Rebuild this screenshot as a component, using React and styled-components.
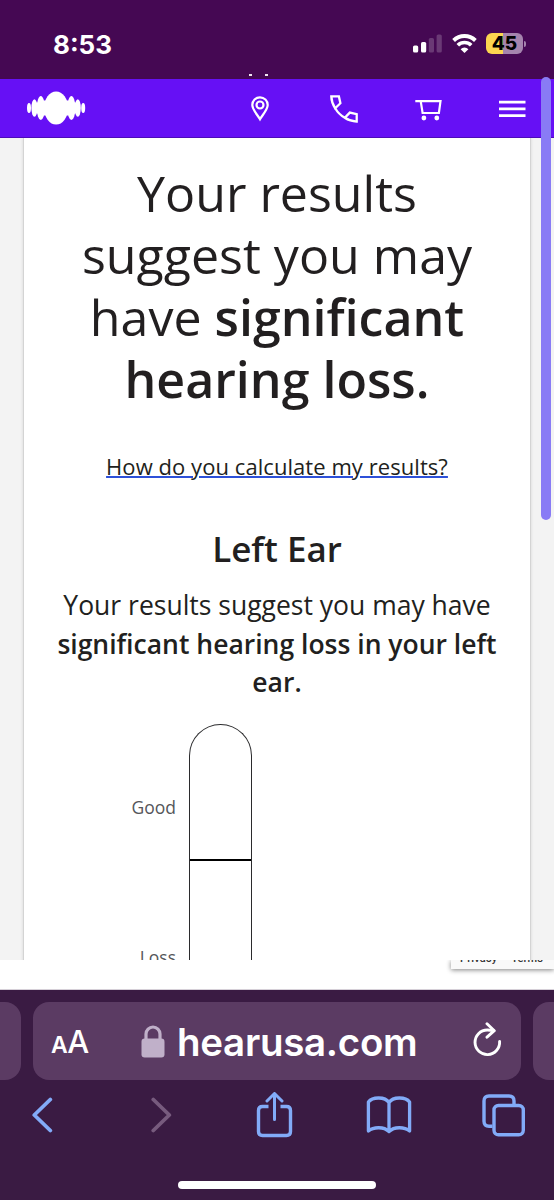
import React from 'react';
import styled, { createGlobalStyle } from 'styled-components';

const palette = {
  statusBar: '#450853',
  nav: '#6610f5',
  text: '#221f20',
  label: '#55565a',
  toolbar: '#3a1b43',
  field: '#5b3b63',
  action: '#82abf8',
};

const App = () => {
  return (
    <>
      <GlobalStyle />
      <Screen>
        <StatusBar>
          <Time>8:53</Time>
          <StatusIcons>
            <SignalIcon />
            <WifiIcon />
            <Battery>
              <BatteryBody>45</BatteryBody>
              <BatteryTip />
            </Battery>
          </StatusIcons>
          <Dots>
            <i />
            <i />
          </Dots>
        </StatusBar>

        <NavBar>
          <Logo />
          <NavIcons>
            <PinIcon />
            <PhoneIcon />
            <CartIcon />
            <MenuIcon />
          </NavIcons>
        </NavBar>

        <Page>
          <Card>
            <Title>
              Your results
              <br />
              suggest you may
              <br />
              have <b>significant</b>
              <br />
              <b>hearing loss.</b>
            </Title>
            <ResultLink href='#'>How do you calculate my results?</ResultLink>
            <EarTitle>Left Ear</EarTitle>
            <EarText>
              Your results suggest you may have
              <br />
              <b>significant hearing loss in your left</b>
              <br />
              <b>ear.</b>
            </EarText>
            <Meter>
              <Labels>
                <Label>Good</Label>
                <Label>Loss</Label>
              </Labels>
              <Tube>
                <TubeTop />
              </Tube>
            </Meter>
          </Card>
        </Page>

        <Strip>
          <Recaptcha>
            <RecaptchaText>
              <span>Privacy</span>
              <span>Terms</span>
            </RecaptchaText>
          </Recaptcha>
        </Strip>

        <Toolbar>
          <AddressRow>
            <NextTab $side='left' />
            <AddressField>
              <TextSize>
                <small>A</small>A
              </TextSize>
              <Domain>
                <LockIcon />
                <span>hearusa.com</span>
              </Domain>
              <ReloadIcon />
            </AddressField>
            <NextTab $side='right' />
          </AddressRow>
          <Actions>
            <BackIcon />
            <ForwardIcon />
            <ShareIcon />
            <BookIcon />
            <TabsIcon />
          </Actions>
          <HomeIndicator />
        </Toolbar>
        <ScrollThumb />
      </Screen>
    </>
  );
};

const SignalIcon = () => (
  <svg width='29' height='19' viewBox='0 0 29 19' fill='#fff'>
    <rect x='0' y='11.5' width='5.2' height='7' rx='1.6' />
    <rect x='8' y='8' width='5.2' height='10.5' rx='1.6' />
    <rect x='15.8' y='4' width='5.2' height='14.5' rx='1.6' opacity='0.2' />
    <rect x='23.6' y='0.5' width='5.2' height='18' rx='1.6' opacity='0.2' />
  </svg>
);

const WifiIcon = () => (
  <svg width='25' height='19' viewBox='0 0 25 19' fill='none'>
    <path d='M1.6 6.5a15.6 15.6 0 0 1 21.8 0' stroke='#fff' strokeWidth='3.9' />
    <path d='M5.8 11.2a9.6 9.6 0 0 1 13.4 0' stroke='#fff' strokeWidth='3.7' />
    <path d='M8.6 15.2a5.6 5.6 0 0 1 7.8 0L12.5 19z' fill='#fff' />
  </svg>
);

const Logo = () => (
  <svg width='59' height='34' viewBox='0 0 59 34' fill='#fff'>
    <ellipse cx='2' cy='17' rx='2' ry='5' />
    <ellipse cx='7.4' cy='17' rx='3' ry='8.7' />
    <ellipse cx='13.8' cy='17' rx='4' ry='12' />
    <ellipse cx='29.1' cy='17' rx='12' ry='16.5' />
    <ellipse cx='44.4' cy='17' rx='4' ry='12' />
    <ellipse cx='50.8' cy='17' rx='3' ry='8.7' />
    <ellipse cx='56.2' cy='17' rx='2' ry='5' />
    <rect x='7.4' y='11.5' width='43.4' height='11' />
    <rect x='13.8' y='9.5' width='30.6' height='15' />
  </svg>
);

const PinIcon = () => (
  <svg width='18' height='26' viewBox='0 0 18 26' fill='none' stroke='#fff' strokeWidth='2.2'>
    <path d='M9 23.2C6.8 19.4 1.3 13.5 1.3 9a7.7 7.7 0 0 1 15.4 0C16.7 13.5 11.2 19.4 9 23.2z' />
    <circle cx='9' cy='9' r='3.5' />
  </svg>
);

const PhoneIcon = () => (
  <svg width='28' height='28' viewBox='0 0 28 28' fill='none' stroke='#fff' strokeWidth='2.3'>
    <path d='M1.3 1.4h7.6l1.5 6.8-5.2 5.1C2.6 9.3 1.4 5.4 1.3 1.4z' />
    <path d='M5.2 13.3c2.3 4 5.6 7.3 9.6 9.5l5-5.2 6.900 1.500v7.500c-4.300-.2-8.300-1.400-11.900-3.800' />
  </svg>
);

const CartIcon = () => (
  <svg width='27' height='23' viewBox='0 -2 27 23' fill='none' stroke='#fff' strokeWidth='2.2'>
    <path d='M0.3 1.2h25.2l-1.6 11.8H7.6L5.7 1.2' />
    <circle cx='8.9' cy='18' r='2.4' fill='#fff' stroke='none' />
    <circle cx='21.8' cy='18' r='2.4' fill='#fff' stroke='none' />
  </svg>
);

const MenuIcon = () => (
  <svg width='27' height='18' viewBox='0 0 27 18' stroke='#fff' strokeWidth='2.8'>
    <path d='M0 2.2h26.5M0 8.9h26.5M0 15.6h26.5' />
  </svg>
);

const LockIcon = () => (
  <svg width='24' height='33' viewBox='0 0 24 33'>
    <path d='M5 16V9a7 7 0 0 1 14 0v7' fill='none' stroke='#c0b0c9' strokeWidth='3.2' />
    <rect x='0.5' y='13.5' width='23' height='19' rx='3.2' fill='#c0b0c9' />
  </svg>
);

const ReloadIcon = () => (
  <svg width='30' height='38' viewBox='0 0 30 38' fill='none' stroke='#fff' strokeWidth='2.9' strokeLinecap='round' strokeLinejoin='round'>
    <path d='M27.6 19.5A12.3 12.3 0 1 1 15.3 8q3.5 0 6 .6' />
    <path d='M15 1.8l7.3 6.900L15 15.200' />
  </svg>
);

const BackIcon = () => (
  <svg width='21' height='36' viewBox='0 0 21 36' fill='none' stroke={palette.action} strokeWidth='3.8' strokeLinecap='round' strokeLinejoin='round'>
    <path d='M18.3 2.5L2.3 18l16 15.5' />
  </svg>
);

const ForwardIcon = () => (
  <svg width='21' height='36' viewBox='0 0 21 36' fill='none' stroke='#775b7e' strokeWidth='3.8' strokeLinecap='round' strokeLinejoin='round'>
    <path d='M2.3 2.5l16 15.5-16 15.5' />
  </svg>
);

const ShareIcon = () => (
  <svg width='37' height='46' viewBox='0 1.5 36 46' fill='none' stroke={palette.action} strokeWidth='3.4' strokeLinecap='round' strokeLinejoin='round'>
    <path d='M12 16H6q-4 0-4 4v21q0 4 4 4h24q4 0 4-4V20q0-4-4-4h-6' strokeLinecap='butt' />
    <path d='M18 29V3.500M10.500 10.500L18 3l7.500 7.500' strokeWidth='3' />
  </svg>
);

const BookIcon = () => (
  <svg width='46' height='38' viewBox='0 0 45 38' fill='none' stroke={palette.action} strokeWidth='3.3' strokeLinejoin='round'>
    <path d='M22.5 6.5C18.5.6 6 .6 1.9 6v29c5.1-4.3 15.5-4.6 20.6.6 5.1-5.2 15.5-4.9 20.6-.6V6C39 .6 26.5.6 22.5 6.5zM22.5 6.5v29' />
  </svg>
);

const TabsIcon = () => (
  <svg width='43' height='43' viewBox='0 0 43 43' fill='none' stroke={palette.action} strokeWidth='3.4'>
    <path d='M10.5 32.2H7q-5 0-5-5V7q0-5 5-5h20q5 0 5 5v3.5' />
    <rect x='12' y='11.5' width='29.3' height='29.3' rx='4.5' />
  </svg>
);

const GlobalStyle = createGlobalStyle`
  body {
    margin: 0;
    background: #fff;
  }

  * {
    box-sizing: border-box;
  }

  svg {
    display: block;
    flex-shrink: 0;
  }
`;

const Screen = styled.div`
  position: relative;
  display: flex;
  flex-direction: column;
  width: 554px;
  height: 1200px;
  overflow: hidden;
  font-family: 'Open Sans', 'Noto Sans', sans-serif;
  color: ${palette.text};
`;

const StatusBar = styled.header`
  position: relative;
  display: flex;
  justify-content: space-between;
  height: 79px;
  padding: 28px 28px 0 53px;
  background: ${palette.statusBar};
  font-family: Inter, 'Liberation Sans', sans-serif;
`;

const Time = styled.div`
  font-size: 26px;
  font-weight: 700;
  line-height: 33px;
  color: #fff;
`;

const StatusIcons = styled.div`
  display: flex;
  align-items: flex-start;
  gap: 9.5px;
  padding-top: 6px;
`;

const Battery = styled.div`
  display: flex;
  align-items: center;
  gap: 1px;
  margin-top: -1px;
`;

const BatteryBody = styled.div`
  width: 37px;
  height: 21px;
  border-radius: 6px;
  background: linear-gradient(90deg, #fcd550 46%, #a584ae 46%);
  font-size: 19px;
  font-weight: 800;
  line-height: 21px;
  text-align: center;
  color: #000;
`;

const BatteryTip = styled.div`
  width: 2px;
  height: 6px;
  border-radius: 0 2px 2px 0;
  background: #a584ae;
`;

/* bottom edge of a line scrolled under the status bar */
const Dots = styled.div`
  position: absolute;
  left: 249px;
  bottom: 3px;
  display: flex;
  gap: 13px;

  & > i {
    width: 3px;
    height: 2px;
    background: #f0e6f2;
  }
`;

const NavBar = styled.nav`
  display: flex;
  align-items: center;
  justify-content: space-between;
  flex-shrink: 0;
  height: 59px;
  padding: 0 29px 1px 27px;
  border-bottom: 1px solid #4c0cb8;
  background: ${palette.nav};
`;

const NavIcons = styled.div`
  display: grid;
  grid-template-columns: 79px 85px 84px 26px;
  align-items: center;
  padding-top: 3px;
`;

const Page = styled.main`
  height: 822px;
  padding: 0 23px;
  background: #f3f3f3;
  overflow: hidden;
`;

const Card = styled.section`
  display: flex;
  flex-direction: column;
  align-items: center;
  height: 860px;
  padding-top: 24px;
  border: solid #d4d4d4;
  border-width: 0 1px;
  background: #fff;
  box-shadow: 0 0 3px rgba(0, 0, 0, 0.12);
  text-align: center;

  b {
    font-weight: 600;
  }
`;

const Title = styled.h1`
  margin: 0;
  font-size: 50.1px;
  font-weight: 400;
  line-height: 62.1px;
  white-space: nowrap;
`;

const ResultLink = styled.a`
  margin-top: 41px;
  font-size: 22px;
  line-height: 30px;
  letter-spacing: 0.06px;
  color: ${palette.text};
  text-decoration: underline;
  text-decoration-color: #2d50d8;
  text-decoration-thickness: 2px;
  text-underline-offset: 1px;
`;

const EarTitle = styled.h2`
  margin: 44px 0 0;
  font-size: 35px;
  font-weight: 600;
  line-height: 48px;
`;

const EarText = styled.p`
  margin: 13px 0 0;
  font-size: 26.5px;
  line-height: 38.4px;
  white-space: nowrap;
`;

const Meter = styled.div`
  display: flex;
  align-self: flex-start;
  gap: 13px;
  margin: 22px 0 0 100px;
`;

const Labels = styled.div`
  display: flex;
  flex-direction: column;
  gap: 126px;
  width: 52px;
  padding-top: 71px;
  text-align: right;
`;

const Label = styled.span`
  font-size: 17.5px;
  line-height: 24px;
  color: ${palette.label};
`;

const Tube = styled.div`
  width: 63px;
  height: 300px;
  border: 1px solid #2b2b2d;
  border-bottom: 0;
  border-radius: 32px 32px 0 0;
`;

const TubeTop = styled.div`
  height: 136px;
  border-bottom: 2px solid #000;
`;

const Strip = styled.div`
  display: flex;
  justify-content: flex-end;
  height: 30px;
  flex-shrink: 0;
  border-bottom: 1px solid #d6d0d8;
  background: #fff;
  overflow: hidden;
`;

const Recaptcha = styled.div`
  width: 103px;
  height: 9px;
  background: #f9f9f9;
  box-shadow: 0 1px 5px #808080;
`;

const RecaptchaText = styled.div`
  display: flex;
  gap: 14px;
  height: 9px;
  padding-left: 9px;
  overflow: hidden;
  font-family: Roboto, sans-serif;
  font-size: 11px;
  font-weight: 500;
  line-height: 16px;
  letter-spacing: 0.15px;
  color: #333;

  & > span {
    margin-top: -9px;
  }
`;

const Toolbar = styled.footer`
  display: flex;
  flex-direction: column;
  height: 210px;
  flex-shrink: 0;
  background: ${palette.toolbar};
`;

const AddressRow = styled.div`
  display: flex;
  gap: 12px;
  padding-top: 12px;
`;

const NextTab = styled.div`
  width: 21px;
  height: 78px;
  border-radius: ${({ $side }) => ($side === 'left' ? '0 16px 16px 0' : '16px 0 0 16px')};
  background: ${palette.field};
`;

const AddressField = styled.div`
  display: grid;
  grid-template-columns: 90px 331px 30px;
  align-items: center;
  width: 488px;
  height: 78px;
  flex-shrink: 0;
  padding-left: 18px;
  border-radius: 16px;
  background: ${palette.field};
  font-family: Inter, 'Liberation Sans', sans-serif;
  color: #fff;
`;

const TextSize = styled.div`
  padding-top: 4px;
  font-size: 31px;
  font-weight: 500;
  line-height: 40px;
  letter-spacing: -0.5px;

  & > small {
    font-size: 23px;
    font-weight: 600;
  }
`;

const Domain = styled.div`
  display: flex;
  align-items: center;
  gap: 12px;
  padding-top: 1px;
  font-size: 38.5px;
  font-weight: 600;
  line-height: 46px;
  letter-spacing: -0.3px;
`;

const Actions = styled.div`
  display: grid;
  grid-template-columns: 119px 105px 110px 116px 43px;
  align-items: center;
  height: 46px;
  margin: 12px 0 0 32px;
`;

const HomeIndicator = styled.div`
  width: 198px;
  height: 8px;
  margin: 43px auto 0;
  border-radius: 4px;
  background: #fff;
`;

const ScrollThumb = styled.div`
  position: absolute;
  top: 77px;
  right: 3px;
  width: 10px;
  height: 443px;
  border-radius: 5px;
  background: #897bf5;
`;

export default App;
